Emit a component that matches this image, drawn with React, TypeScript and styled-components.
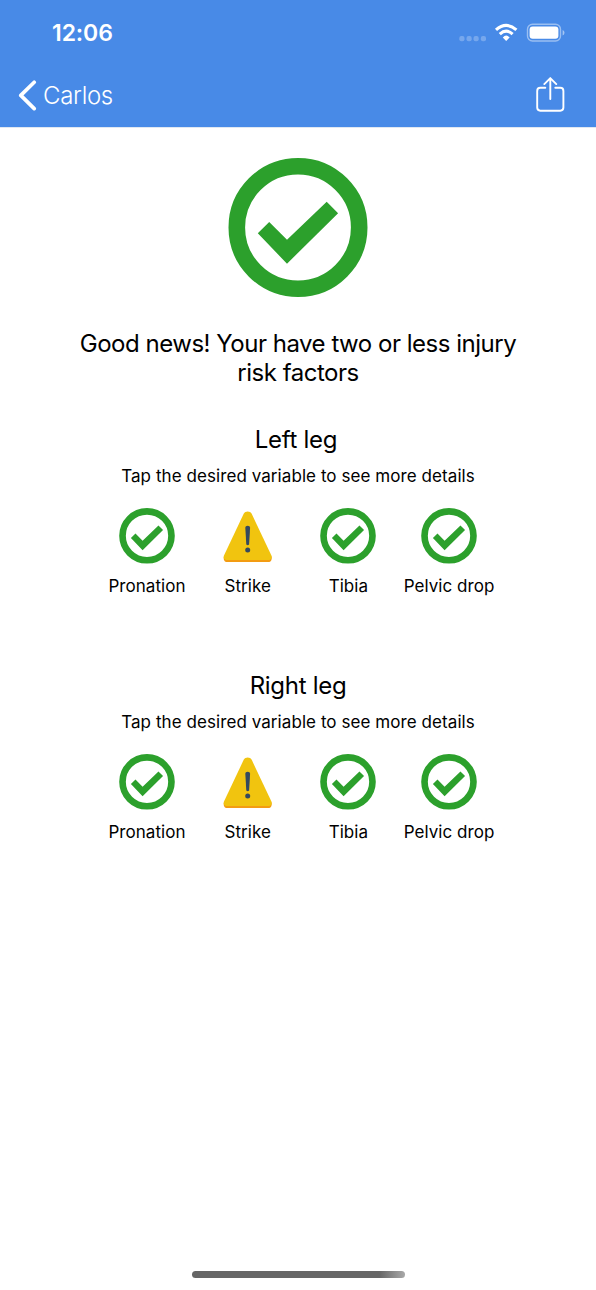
import React from "react";
import styled, { createGlobalStyle } from "styled-components";

const GlobalStyle = createGlobalStyle`
  * { box-sizing: border-box; }
  body { margin: 0; background: #fff; }
`;

const Screen = styled.div`
  width: 596px;
  height: 1290px;
  display: flex;
  flex-direction: column;
  background: #fff;
  color: #000;
  font-family: Inter, "Liberation Sans", sans-serif;
`;

const Header = styled.header`
  height: 128px;
  flex: none;
  background: #488ae7;
  border-bottom: 1px solid #dfe7f2;
  color: #fff;
`;

const StatusBar = styled.div`
  height: 64px;
  display: flex;
  align-items: center;
  justify-content: space-between;
  padding: 2px 31px 0 52px;
`;

const Clock = styled.time`
  font-size: 23px;
  line-height: 28px;
  font-weight: 600;
  letter-spacing: -0.1px;
`;

const StatusIcons = styled.svg`
  display: block;
  width: 108px;
  height: 24px;
`;

const NavBar = styled.nav`
  height: 62px;
  display: flex;
  align-items: center;
  justify-content: space-between;
  padding: 0 31px 0 18px;
`;

const BackButton = styled.button`
  display: flex;
  align-items: center;
  gap: 6px;
  padding: 1px 0 0;
  border: 0;
  background: none;
  color: #fff;
  font: 300 24px/32px Inter, "Liberation Sans", sans-serif;
  letter-spacing: -0.3px;
`;

const ShareButton = styled.button`
  padding: 0;
  border: 0;
  background: none;
  color: #fff;
  svg { display: block; }
`;

const Content = styled.main`
  flex: 1;
  display: flex;
  flex-direction: column;
  align-items: center;
  padding-top: 30px;
`;

const Result = styled.div`
  svg { display: block; }
`;

const Headline = styled.p`
  margin: 0;
  font-size: 24px;
  line-height: 29px;
  text-align: center;
  letter-spacing: -0.48px;
`;

const Message = styled.div`
  margin-top: 31px;
`;

const Leg = styled.section<{ $top: number }>`
  margin-top: ${(p) => p.$top}px;
  height: 176px;
  display: flex;
  flex-direction: column;
  align-items: center;
`;

const LegTitle = styled.h2<{ $trail: number }>`
  margin: 0;
  padding-right: ${(p) => p.$trail}px;
  font-size: 24px;
  line-height: 30px;
  font-weight: 400;
  letter-spacing: -0.3px;
`;

const Hint = styled.p`
  margin: 10px 0 0;
  font-size: 17px;
  line-height: 22px;
  letter-spacing: 0.07px;
`;

const Variables = styled.div`
  display: grid;
  grid-template-columns: repeat(4, 100.7px);
  margin-top: 21px;
`;

const Variable = styled.button`
  display: flex;
  flex-direction: column;
  align-items: center;
  gap: 11px;
  padding: 0;
  border: 0;
  background: none;
  color: #000;
  font: 400 17px/22px Inter, "Liberation Sans", sans-serif;
  letter-spacing: 0.05px;
  white-space: nowrap;
  svg { display: block; }
`;

const HomeArea = styled.footer`
  height: 19px;
  display: flex;
  justify-content: center;
`;

const HomeIndicator = styled.div`
  width: 213px;
  height: 7px;
  border-radius: 4px;
  background: linear-gradient(90deg, #666 0%, #666 88%, #a9a9a9 100%);
`;

const CheckIcon = ({ size }: { size: number }) => (
  <svg width={size} height={size} viewBox="-0.5 0 140 140">
    <circle cx="69.5" cy="69.5" r="61.2" fill="none" stroke="#2ca02c" strokeWidth="16.6" />
    <path d="M29.3 75.3 40.7 64 58.5 81.7 98.2 43.7 109.6 55.3 58.5 105.7Z" fill="#2ca02c" />
  </svg>
);

const WarningIcon = () => (
  <svg width="56" height="56" viewBox="0.3 0.2 56 56">
    <path d="M4.2 48.5 Q3.2 54.3 8 54.3 H48 Q52.8 54.3 51.8 48.5Z" fill="#f39c12" />
    <path d="M24 6 C25.6 3 30.4 3 32 6 L51.6 47.5 Q53.2 52.3 48 52.3 H8 Q2.8 52.3 4.4 47.5Z" fill="#f1c40f" />
    <path d="M25.6 20 Q25.6 18 28 18 Q30.4 18 30.4 20 L29.4 36.6 Q28 38.2 26.6 36.6Z" fill="#34495e" />
    <circle cx="28" cy="42.1" r="2.5" fill="#34495e" />
  </svg>
);

const variables = [
  { name: "Pronation", ok: true },
  { name: "Strike", ok: false },
  { name: "Tibia", ok: true },
  { name: "Pelvic drop", ok: true },
];

const LegSection = ({ title, top, trail = 0 }: { title: string; top: number; trail?: number }) => (
  <Leg $top={top}>
    <LegTitle $trail={trail}>{title}</LegTitle>
    <Hint>Tap the desired variable to see more details</Hint>
    <Variables>
      {variables.map((v) => (
        <Variable key={v.name}>
          {v.ok ? <CheckIcon size={56} /> : <WarningIcon />}
          {v.name}
        </Variable>
      ))}
    </Variables>
  </Leg>
);

export default function App() {
  return (
    <>
      <GlobalStyle />
      <Screen>
        <Header>
          <StatusBar>
            <Clock>12:06</Clock>
            <StatusIcons viewBox="0 0 108 24">
              <g fill="#fff" fillOpacity="0.25">
                <rect x="2.3" y="15" width="5.2" height="5.2" rx="2" />
                <rect x="9.5" y="15" width="5.2" height="5.2" rx="2" />
                <rect x="16.5" y="15" width="5.2" height="5.2" rx="2" />
                <rect x="23.8" y="15" width="5.2" height="5.2" rx="2" />
              </g>
              <g fill="none" stroke="#fff" strokeWidth="3.1">
                <path d="M39 8.9 Q49.2 0 59.4 8.9" />
                <path d="M42.8 13.1 Q49.2 7.2 55.6 13.1" />
              </g>
              <path d="M45.8 16.4 Q49.2 12.8 52.6 16.4 L49.2 20Z" fill="#fff" />
              <rect x="70.5" y="3.2" width="33" height="16.8" rx="5" fill="none" stroke="#fff" strokeOpacity="0.45" strokeWidth="1.4" />
              <rect x="72.6" y="5.5" width="28.8" height="12.2" rx="3" fill="#fff" />
              <path d="M105.6 9 Q107.5 9.7 107.5 11.7 Q107.5 13.7 105.6 14.4Z" fill="#fff" fillOpacity="0.5" />
            </StatusIcons>
          </StatusBar>
          <NavBar>
            <BackButton>
              <svg width="19" height="32" viewBox="0 0 19 32" fill="none" stroke="#fff" strokeWidth="3.7" strokeLinecap="round" strokeLinejoin="round">
                <path d="M16.2 2.2 2.8 15.4 16.2 28.6" />
              </svg>
              Carlos
            </BackButton>
            <ShareButton aria-label="Share">
              <svg width="30" height="36" viewBox="0 0 30 36" fill="none" stroke="#fff" strokeWidth="1.9" strokeLinecap="round" strokeLinejoin="round">
                <path d="M10.3 10.8 H5.3 Q2.2 10.8 2.2 13.9 V30.6 Q2.2 33.7 5.3 33.7 H25.3 Q28.4 33.7 28.4 30.6 V13.9 Q28.4 10.8 25.3 10.8 H20.3" />
                <path d="M15.3 22 V1.3 M9.3 7.1 15.3 1.1 21.3 7.1" />
              </svg>
            </ShareButton>
          </NavBar>
        </Header>
        <Content>
          <Result>
            <CheckIcon size={140} />
          </Result>
          <Message>
            <Headline>Good news! Your have two or less injury</Headline>
            <Headline>risk factors</Headline>
          </Message>
          <LegSection title="Left leg" top={38} trail={4} />
          <LegSection title="Right leg" top={70} />
        </Content>
        <HomeArea>
          <HomeIndicator />
        </HomeArea>
      </Screen>
    </>
  );
}
